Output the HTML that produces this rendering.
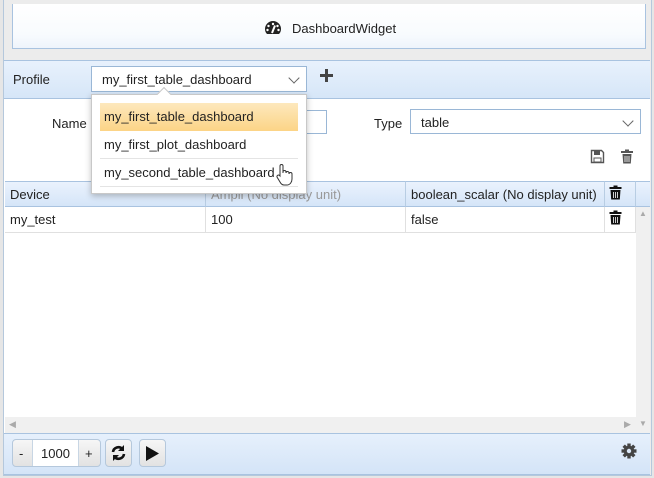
<!DOCTYPE html>
<html><head><style>
*{box-sizing:border-box}
body{margin:0;width:654px;height:478px;background:#e6e6e6;font-family:"Liberation Sans",sans-serif;font-size:13px;color:#222;position:relative;overflow:hidden}
.a{position:absolute}
.frame{left:3px;top:0;width:649px;height:476px;border:1px solid #b5c8dc;border-top:none;background:#ececec}
.hdr{left:12px;top:4px;width:634px;height:45px;background:linear-gradient(#fff,#f8fbfe 70%,#eef4fc);border:1px solid #a9c3e0;border-top:none}
.bar{left:4px;top:60px;width:646px;height:39px;background:linear-gradient(#e8f1fc,#d6e6f8);border-top:1px solid #a9c3e0;border-bottom:1px solid #a9c3e0}
.sel{background:#fff;border:1px solid #9ab7d6;height:26px;padding:5px 10px;font-size:13px}
.chev{position:absolute;right:8px;top:7px;width:8px;height:8px;border-right:1.3px solid #666;border-bottom:1.3px solid #666;transform:rotate(45deg)}
.body{left:4px;top:99px;width:646px;height:334px;background:#fff}
.th{top:181px;height:26px;background:linear-gradient(#eaf2fd,#d5e5f8);border-top:1px solid #a9c3e0;border-bottom:1px solid #a9c3e0;border-right:1px solid #b8cde3;padding:5px 5px;font-size:13px}
.td{top:207px;height:26px;border-bottom:1px solid #e0e0e0;border-right:1px solid #e0e0e0;padding:5px 5px}
.foot{left:4px;top:433px;width:646px;height:42px;background:linear-gradient(#e6f0fc,#d4e4f7);border-top:1px solid #a9c3e0;border-bottom:1px solid #a9c3e0}
.btn{top:439px;height:28px;border:1px solid #b5c8dc;border-radius:4px;background:linear-gradient(#f6f6f6,#e2e2e2)}
.dd{left:91px;top:94px;width:216px;height:100px;background:#fff;border:1px solid #c8c8c8;box-shadow:0 2px 6px rgba(0,0,0,.25)}
.it{left:8px;width:198px;height:28px;padding:6px 4px;font-size:13px}
</style></head><body>
<div class="a frame"></div>
<div class="a hdr"></div>
<svg class="a" style="left:264px;top:20px" width="18" height="15" viewBox="0 0 18 15"><path d="M9 1A8 8 0 0 0 1 9q0 3 2 5h12q2-2 2-5A8 8 0 0 0 9 1z" fill="#222"/><circle cx="9" cy="4" r="1.2" fill="#fff"/><circle cx="4.5" cy="6" r="1.2" fill="#fff"/><circle cx="13.5" cy="6" r="1.2" fill="#fff"/><circle cx="3.5" cy="10" r="1.2" fill="#fff"/><circle cx="14.5" cy="10" r="1.2" fill="#fff"/><path d="M8 13L11 5.5" stroke="#fff" stroke-width="2"/></svg>
<div class="a" style="left:292px;top:21px;font-size:13px">DashboardWidget</div>
<div class="a bar"></div>
<div class="a" style="left:13px;top:72px">Profile</div>
<div class="a sel" style="left:91px;top:66px;width:216px">my_first_table_dashboard<span class="chev"></span></div>
<svg class="a" style="left:320px;top:69px" width="13" height="13" viewBox="0 0 13 13"><path d="M6.5 0v13M0 6.5h13" stroke="#444" stroke-width="3"/></svg>
<div class="a body"></div>
<div class="a" style="left:52px;top:116px">Name</div>
<div class="a sel" style="left:300px;top:110px;width:27px;height:24px"></div>
<div class="a" style="left:374px;top:116px">Type</div>
<div class="a sel" style="left:410px;top:109px;width:231px;height:25px">table<span class="chev"></span></div>
<svg class="a" style="left:590px;top:149px" width="15" height="15" viewBox="0 0 15 15"><path d="M1.5 1.5h10l2 2v10h-12z" fill="none" stroke="#555" stroke-width="1.4"/><rect x="4" y="2" width="6" height="4" fill="#555"/><rect x="4" y="9" width="7" height="4" fill="none" stroke="#555"/></svg>
<svg class="a" style="left:620px;top:149px" width="14" height="15" viewBox="0 0 14 15"><rect x="1" y="2" width="12" height="2" fill="#555"/><rect x="5" y="0.5" width="4" height="2" fill="#555"/><path d="M2.5 5h9l-.7 9.5h-7.6z" fill="#555"/><path d="M5 7v6M7 7v6M9 7v6" stroke="#fff" stroke-width=".8"/></svg>
<div class="a th" style="left:5px;width:201px">Device</div>
<div class="a th" style="left:206px;width:200px;color:#999">Ampli (No display unit)</div>
<div class="a th" style="left:406px;width:199px">boolean_scalar (No display unit)</div>
<div class="a th" style="left:605px;width:31px"></div>
<div class="a th" style="left:636px;width:14px;border-right:none"></div>
<svg class="a" style="left:609px;top:185px" width="13" height="15" viewBox="0 0 13 15"><rect x=".5" y="2" width="12" height="2" fill="#111"/><rect x="4.5" y=".5" width="4" height="2" fill="#111"/><path d="M1.5 5h10l-.7 9.5h-8.6z" fill="#111"/><path d="M4.5 7v6M6.5 7v6M8.5 7v6" stroke="#fff" stroke-width=".8"/></svg>
<div class="a td" style="left:5px;width:201px">my_test</div>
<div class="a td" style="left:206px;width:200px">100</div>
<div class="a td" style="left:406px;width:199px">false</div>
<div class="a td" style="left:605px;width:31px"></div>
<svg class="a" style="left:609px;top:210px" width="13" height="15" viewBox="0 0 13 15"><rect x=".5" y="2" width="12" height="2" fill="#111"/><rect x="4.5" y=".5" width="4" height="2" fill="#111"/><path d="M1.5 5h10l-.7 9.5h-8.6z" fill="#111"/><path d="M4.5 7v6M6.5 7v6M8.5 7v6" stroke="#fff" stroke-width=".8"/></svg>
<div class="a" style="left:636px;top:207px;width:14px;height:210px;background:#f0f0f0"></div>
<div class="a" style="left:5px;top:417px;width:645px;height:16px;background:#f0f0f0"></div>
<div class="a" style="left:9px;top:419px;color:#aaa;font-size:9px">◀</div>
<div class="a" style="left:624px;top:419px;color:#aaa;font-size:9px">▶</div>
<div class="a" style="left:639px;top:419px;color:#aaa;font-size:8px">▼</div>
<div class="a" style="left:639px;top:209px;color:#aaa;font-size:8px">▲</div>
<div class="a foot"></div>
<div class="a btn" style="left:12px;width:89px;overflow:hidden"><div class="a" style="left:6px;top:6px">-</div><div class="a" style="left:19px;top:0;width:47px;height:26px;background:#fff;border-left:1px solid #c8d6e4;border-right:1px solid #c8d6e4;text-align:center;padding-top:6px">1000</div><div class="a" style="left:72px;top:6px">+</div></div>
<div class="a btn" style="left:105px;width:27px"><svg class="a" style="left:4px;top:5px" width="17" height="16" viewBox="0 0 17 16"><path d="M3 7a5.5 5.5 0 0 1 9.5-3" fill="none" stroke="#111" stroke-width="2.6"/><path d="M14 0v6h-6z" fill="#111"/><path d="M14 9a5.5 5.5 0 0 1-9.5 3" fill="none" stroke="#111" stroke-width="2.6"/><path d="M3 16v-6h6z" fill="#111"/></svg></div>
<div class="a btn" style="left:139px;width:27px"><svg class="a" style="left:5px;top:5px" width="15" height="17" viewBox="0 0 15 17"><path d="M1 1l13 7.5L1 16z" fill="#111"/></svg></div>
<svg class="a" style="left:621px;top:443px" width="16" height="16" viewBox="0 0 16 16"><g fill="#444"><circle cx="8" cy="8" r="5.3"/><rect x="6.3" y="0.5" width="3.4" height="15"/><rect x="0.5" y="6.3" width="15" height="3.4"/><rect x="6.3" y="0.5" width="3.4" height="15" transform="rotate(45 8 8)"/><rect x="6.3" y="0.5" width="3.4" height="15" transform="rotate(-45 8 8)"/></g><circle cx="8" cy="8" r="2.2" fill="#dbe8f8"/></svg>
<div class="a dd">
<div class="a it" style="top:8px;background:linear-gradient(#fde8bd,#fcd486)">my_first_table_dashboard</div>
<div class="a it" style="top:36px;border-bottom:1px solid #e4e4e4">my_first_plot_dashboard</div>
<div class="a it" style="top:64px;border-bottom:1px solid #e4e4e4">my_second_table_dashboard</div>
</div>
<div class="a" style="left:159px;top:89px;width:10px;height:10px;background:#fff;border-left:1px solid #c8c8c8;border-top:1px solid #c8c8c8;transform:rotate(45deg)"></div>
<svg class="a" style="left:275px;top:163px" width="20" height="24" viewBox="0 0 20 24"><path d="M5 13V3a1.5 1.5 0 0 1 3 0v7l0-1a1.5 1.5 0 0 1 3 0v1a1.5 1.5 0 0 1 3 0v1a1.5 1.5 0 0 1 3 0v5c0 3-2 6-5 6H9c-2 0-3-1-4-3l-3-5a1.5 1.5 0 0 1 2.5-1.5z" fill="#fff" stroke="#333" stroke-width="1"/></svg>
</body></html>
